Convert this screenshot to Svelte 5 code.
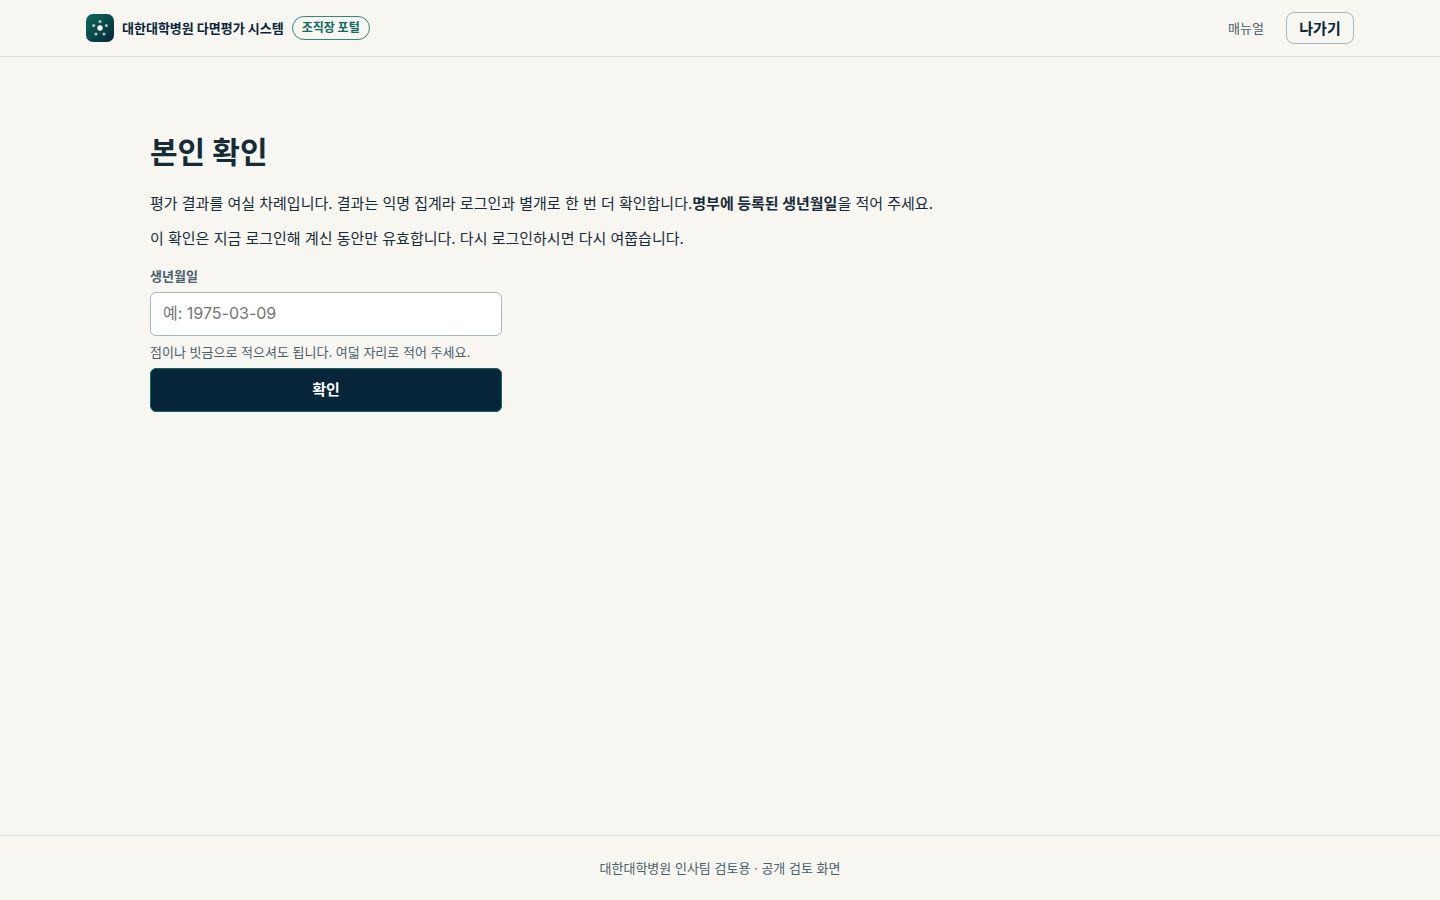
<script>
	let birth = $state("")

	/** Small dots around the centre of the logo */
	const dots = [
		{ x: 14, y: 7.4 },
		{ x: 20.3, y: 11.5 },
		{ x: 18, y: 20 },
		{ x: 10, y: 20 },
		{ x: 7.7, y: 11.5 },
	]

	/** @param {SubmitEvent} event */
	function confirm(event) {
		event.preventDefault()
	}
</script>

<div class="page">
	<header>
		<div class="bar">
			<a class="brand" href="#top">
				<svg viewBox="0 0 28 28" width="28" height="28" aria-hidden="true">
					<defs>
						<linearGradient id="logo" x1="0" y1="0" x2="1" y2="1">
							<stop offset="0" stop-color="#0b6b5e" />
							<stop offset="1" stop-color="#08263a" />
						</linearGradient>
					</defs>
					<rect width="28" height="28" rx="7" fill="url(#logo)" />
					<circle cx="14" cy="14" r="2.7" fill="#fff" />
					{#each dots as dot}
						<circle cx={dot.x} cy={dot.y} r="1.5" fill="#fff" opacity="0.7" />
					{/each}
				</svg>
				<span>대한대학병원 다면평가 시스템</span>
			</a>
			<span class="chip">조직장 포털</span>
			<nav>
				<a href="#manual">매뉴얼</a>
				<button type="button" class="leave">나가기</button>
			</nav>
		</div>
	</header>

	<main>
		<h1>본인 확인</h1>
		<p>
			평가 결과를 여실 차례입니다. 결과는 익명 집계라 로그인과 별개로 한 번 더 확인합니다.<strong>명부에 등록된 생년월일</strong>을 적어 주세요.
		</p>
		<p>이 확인은 지금 로그인해 계신 동안만 유효합니다. 다시 로그인하시면 다시 여쭙습니다.</p>
		<form onsubmit={confirm}>
			<label for="birth">생년월일</label>
			<input
				id="birth"
				type="text"
				inputmode="numeric"
				placeholder="예: 1975-03-09"
				aria-describedby="birth-hint"
				bind:value={birth}
			/>
			<small id="birth-hint">점이나 빗금으로 적으셔도 됩니다. 여덟 자리로 적어 주세요.</small>
			<button type="submit" class="submit">확인</button>
		</form>
	</main>

	<footer>대한대학병원 인사팀 검토용 · 공개 검토 화면</footer>
</div>

<style>
	:global(body) {
		background: #f8f6f1;
	}
	.page {
		--ink: #162b38;
		--navy: #08263a;
		--muted: #48606d;
		--line: #d3dce0;
		--field: #a5b6c0;
		--teal: #0b6b5e;
		display: flex;
		flex-direction: column;
		min-height: 100vh;
		color: var(--ink);
		font-family: Inter, "Noto Sans CJK KR", sans-serif;
		font-size: 15px;
		line-height: 24px;
	}
	.page * {
		box-sizing: border-box;
	}
	header {
		border-bottom: 1px solid var(--line);
	}
	.bar {
		display: flex;
		align-items: center;
		gap: 8px;
		max-width: 1300px;
		min-height: 56px;
		margin: 0 auto;
		padding: 0 16px;
	}
	.brand {
		display: flex;
		align-items: center;
		gap: 8px;
		color: var(--navy);
		font-size: 13px;
		font-weight: 700;
		text-decoration: none;
	}
	.chip {
		padding: 0 9px;
		border: 1px solid #2b8c7e;
		border-radius: 12px;
		color: var(--teal);
		font-size: 12px;
		font-weight: 700;
		line-height: 22px;
	}
	nav {
		display: flex;
		align-items: center;
		gap: 22px;
		margin-left: auto;
	}
	nav a {
		color: var(--muted);
		font-size: 13px;
		text-decoration: none;
	}
	button,
	input {
		font-family: inherit;
	}
	.leave {
		min-width: 68px;
		height: 32px;
		padding: 0 12px 2px;
		border: 1px solid var(--field);
		border-radius: 8px;
		background: transparent;
		color: var(--navy);
		font-size: 15px;
		font-weight: 700;
		cursor: pointer;
	}
	main {
		flex: 1;
		width: 100%;
		max-width: 1180px;
		margin: 0 auto;
		padding: 71px 20px;
	}
	h1 {
		margin: 0 0 16px;
		font-size: 30px;
		font-weight: 700;
		line-height: 48px;
	}
	p {
		margin: 0 0 11px;
	}
	form {
		display: flex;
		flex-direction: column;
		gap: 6px;
		max-width: 352px;
		margin-top: 15px;
	}
	label {
		color: var(--muted);
		font-size: 13px;
		font-weight: 700;
		line-height: 20px;
	}
	input {
		height: 44px;
		padding: 0 12px 2px;
		border: 1px solid var(--field);
		border-radius: 6px;
		background: #fff;
		color: var(--ink);
		font-size: 16px;
	}
	input::placeholder {
		color: #757575;
	}
	small {
		color: var(--muted);
		font-size: 13px;
		line-height: 20px;
	}
	.submit {
		height: 44px;
		padding: 0 12px 4px;
		border: 1px solid var(--teal);
		border-radius: 6px;
		background: var(--navy);
		color: #fff;
		font-size: 15px;
		font-weight: 700;
		cursor: pointer;
	}
	footer {
		padding: 20px;
		border-top: 1px solid var(--line);
		color: var(--muted);
		font-size: 13px;
		text-align: center;
	}
</style>
